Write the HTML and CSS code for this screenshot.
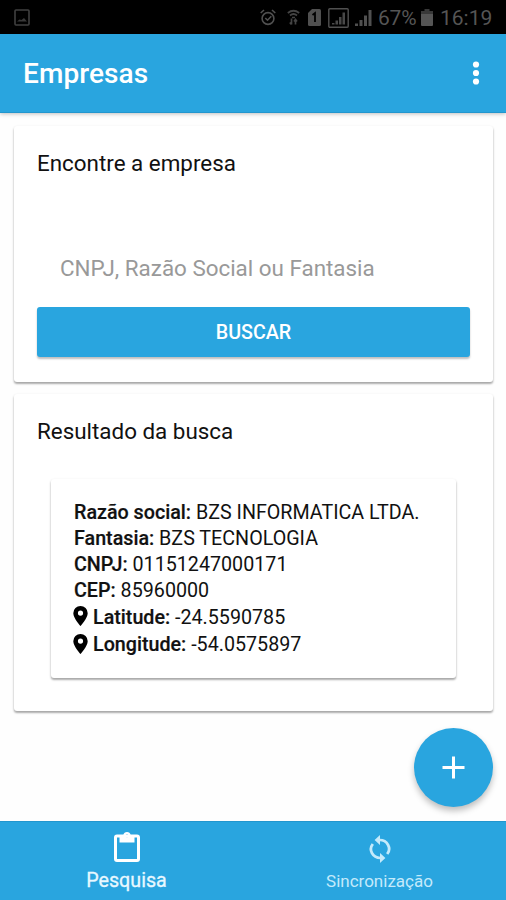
FILE: index.html
```html
<!DOCTYPE html>
<html lang="pt-BR">
<head>
    <meta charset="UTF-8">
    <meta name="viewport" content="width=device-width, initial-scale=1.0">
    <title>Empresas</title>
    <link rel="stylesheet" href="styles.css">
</head>
<body>
    <div class="status">
        <svg class="status-image" width="16" height="17" viewBox="0 0 16 17">
            <rect x="1" y="1" width="14" height="15" rx="1" fill="none" stroke="#404040" stroke-width="1.6"/>
            <path d="M3 12.5l2.500-2 2 .5 2.500-2 3 3.500z" fill="#383838"/>
        </svg>
        <div class="status-right">
            <svg class="alarm" width="16" height="17" viewBox="0 0 16 17" fill="none" stroke="#505050" stroke-width="1.6">
                <circle cx="8" cy="9.500" r="5.900"/>
                <path d="M.7 4l3.300-3M15.300 4L12 1M5.300 9l2.200 2.200 3.800-4"/>
            </svg>
            <svg class="wifi" width="13" height="17" viewBox="0 0 13 17" fill="none" stroke="#444" stroke-width="1.700">
                <path d="M.8 4Q6.500-.5 12.200 4M3 6.500Q6.500 3.500 10 6.500M5 8.500h3"/>
                <path d="M4.500 9.500v6M2.800 13.500l1.700 2M8.500 15.500v-5M7 12.500l1.500-2 1.500 2"/>
            </svg>
            <svg class="sim" width="13" height="17" viewBox="0 0 13 17">
                <path d="M4 0h7.500Q13 0 13 1.500v14Q13 17 11.500 17h-10Q0 17 0 15.500V4z" fill="#505050"/>
                <path d="M4.500 6l2.500-2v9" fill="none" stroke="#000" stroke-width="1.800"/>
            </svg>
            <svg class="signal-box" width="21" height="20" viewBox="0 0 21 20">
                <rect x=".8" y=".8" width="19.400" height="18.400" rx="1" fill="none" stroke="#505050" stroke-width="1.400"/>
                <path d="M4 15h2.500v1.500H4zM7.500 12.500H10v4H7.500zM11 9h2.500v7.500H11zM14.500 4.500H17v12h-2.500z" fill="#484848"/>
            </svg>
            <svg class="signal" width="17" height="17" viewBox="0 0 17 17" fill="#505050">
                <path d="M0 14.500h3V17H0zM4.500 11h3v6h-3zM9 6.500h3V17H9zM13.500 1h3v16h-3z"/>
            </svg>
            <span class="percent">67%</span>
            <svg class="battery" width="12" height="17" viewBox="0 0 12 17">
                <path d="M3.500 0h5v2H12v3H0V2h3.500z" fill="#383838"/>
                <path d="M0 5h12v11q0 1-1 1H1q-1 0-1-1z" fill="#555"/>
            </svg>
            <span class="clock">16:19</span>
        </div>
    </div>

    <header class="toolbar">
        <h1>Empresas</h1>
        <svg class="more" width="8" height="26" viewBox="0 0 8 26" fill="#fff">
            <circle cx="4" cy="4.500" r="3.100"/>
            <circle cx="4" cy="13" r="3.100"/>
            <circle cx="4" cy="21.500" r="3.100"/>
        </svg>
    </header>

    <main class="content">
        <section class="card search">
            <h2>Encontre a empresa</h2>
            <input class="field" type="text" placeholder="CNPJ, Razão Social ou Fantasia">
            <button class="btn">BUSCAR</button>
        </section>

        <section class="card results">
            <h2>Resultado da busca</h2>
            <div class="card company">
                <p><b>Razão social:</b> BZS INFORMATICA LTDA.</p>
                <p><b>Fantasia:</b> BZS TECNOLOGIA</p>
                <p><b>CNPJ:</b> 01151247000171</p>
                <p><b>CEP:</b> 85960000</p>
                <p class="geo">
                    <svg class="pin" width="15" height="20" viewBox="0 0 15 20"><path fill-rule="evenodd" d="M7.500 0A7.200 7.200 0 0 1 14.700 7.200c0 5-7.200 12.800-7.200 12.800S.3 12.200.3 7.200A7.200 7.200 0 0 1 7.500 0zm0 4.500a2.600 2.600 0 1 0 0 5.200 2.600 2.600 0 0 0 0-5.200z"/></svg>
                    <span><b>Latitude:</b> -24.5590785</span>
                </p>
                <p class="geo">
                    <svg class="pin" width="15" height="20" viewBox="0 0 15 20"><path fill-rule="evenodd" d="M7.500 0A7.200 7.200 0 0 1 14.700 7.200c0 5-7.200 12.800-7.200 12.800S.3 12.200.3 7.200A7.200 7.200 0 0 1 7.500 0zm0 4.500a2.600 2.600 0 1 0 0 5.200 2.600 2.600 0 0 0 0-5.200z"/></svg>
                    <span><b>Longitude:</b> -54.0575897</span>
                </p>
            </div>
        </section>

        <button class="fab" aria-label="Adicionar">
            <svg width="23" height="23" viewBox="0 0 23 23" stroke="#fff" stroke-width="3"><path d="M11.500 .5v22M.5 11.500h22"/></svg>
        </button>
    </main>

    <nav class="tabs">
        <a class="tab active">
            <svg width="26" height="31" viewBox="0 0 26 31">
                <rect x="1.500" y="5" width="23" height="24.500" rx="1.500" fill="none" stroke="#fff" stroke-width="3"/>
                <path fill="#fff" fill-rule="evenodd" d="M5.500 4h3.800a3.800 3.800 0 0 1 7.400 0h3.800v7.500h-15zM13 3.200a1.500 1.500 0 1 0 0 3 1.500 1.500 0 0 0 0-3z"/>
            </svg>
            <span>Pesquisa</span>
        </a>
        <a class="tab">
            <svg width="22" height="28" viewBox="0 0 22 30" preserveAspectRatio="none">
                <path fill="none" stroke="#c4eafb" stroke-width="2.800" d="M10.500 5.400a9.400 9.400 0 0 1 7.700 15M11.500 24.600a9.400 9.400 0 0 1-7.700-15"/>
                <path fill="#c4eafb" d="M11 0v10.800L5.600 5.400zM11 30V19.200l5.400 5.400z"/>
            </svg>
            <span>Sincronização</span>
        </a>
    </nav>
</body>
</html>
```
FILE: styles.css
```css
* {
    box-sizing: border-box;
}
body {
    margin: 0;
    height: 900px;
    display: flex;
    flex-direction: column;
    background: #fefefe;
    color: #111;
    font-family: Roboto, sans-serif;
    overflow: hidden;
}
h1, h2, p {
    margin: 0;
    white-space: nowrap;
}
svg {
    display: block;
    flex: none;
}

/* status bar */
.status {
    height: 34px;
    flex: none;
    display: flex;
    justify-content: space-between;
    align-items: center;
    padding: 1px 14px 0;
    background: #000;
    color: #555;
    font-size: 21px;
}
.status-right {
    display: flex;
    align-items: center;
}
.wifi {
    margin-left: 11px;
}
.sim {
    margin-left: 8px;
}
.signal-box {
    margin-left: 7px;
}
.signal {
    margin-left: 6px;
}
.percent {
    width: 39px;
    margin-left: 6px;
    font-size: 21px;
    letter-spacing: -.2px;
}
.battery {
    margin-left: 4px;
}
.clock {
    width: 52px;
    margin-left: 7px;
}

/* header */
.toolbar {
    height: 79px;
    flex: none;
    display: flex;
    justify-content: space-between;
    align-items: center;
    padding: 0 26px 0 23px;
    background: #29a5df;
    border-bottom: 1px solid #2296ce;
    box-shadow: 0 1px 4px rgba(0, 0, 0, .25);
    color: #fff;
}
.toolbar h1 {
    font-size: 28px;
    font-weight: 500;
    letter-spacing: .1px;
}

.content {
    flex: 1;
    display: flex;
    flex-direction: column;
    padding: 13px 13px 0 14px;
}
.card {
    background: #fff;
    border-radius: 3px;
    box-shadow: 0 2px 2px rgba(0, 0, 0, .28), 0 1px 3px rgba(0, 0, 0, .12);
}
.card h2 {
    font-size: 22.4px;
    font-weight: 400;
    line-height: 28px;
}
.search {
    height: 256px;
    display: flex;
    flex-direction: column;
    padding: 23px 23px 0;
}
.field {
    height: 52px;
    margin-top: 65px;
    padding: 0 23px;
    border: 0;
    outline: 0;
    background: none;
    font: 22.4px Roboto, sans-serif;
}
.field::placeholder {
    color: #999;
}
.btn {
    height: 50px;
    margin-top: 13px;
    border: 0;
    border-radius: 3px;
    background: #29a5df;
    box-shadow: 0 2px 2px rgba(0, 0, 0, .25);
    color: #fff;
    font: 500 19.700px Roboto, sans-serif;
}
.results {
    height: 317px;
    margin-top: 12px;
    padding: 23px 37px 0;
}
.results h2 {
    margin-left: -14px;
}
.company {
    height: 199px;
    margin-top: 34px;
    padding: 21px 23px 0;
    font-size: 19.700px;
    line-height: 26px;
}
.company b {
    font-weight: 500;
    -webkit-text-stroke: .2px;
}
.geo {
    height: 27.5px;
    display: flex;
    align-items: center;
    gap: 5px;
}
.pin {
    margin: 0 0 3px -1px;
}
.fab {
    width: 79px;
    height: 79px;
    margin-top: 17px;
    align-self: flex-end;
    display: flex;
    justify-content: center;
    align-items: center;
    border: 0;
    border-radius: 50%;
    background: #29a5df;
    box-shadow: 0 4px 6px rgba(0, 0, 0, .25);
}

/* bottom tabs */
.tabs {
    height: 79px;
    flex: none;
    display: flex;
    background: #29a5df;
    border-top: 1px solid #2296ce;
}
.tab {
    flex: 1;
    display: flex;
    flex-direction: column;
    align-items: center;
    padding-top: 13px;
    color: #c4eafb;
    font-size: 17px;
    line-height: 24px;
}
.tab span {
    margin-top: 6px;
}
.active {
    padding-top: 9px;
    color: #e8f8ff;
    font-size: 19.700px;
}
.active span {
    margin-top: 7px;
    -webkit-text-stroke: .3px;
}
```
